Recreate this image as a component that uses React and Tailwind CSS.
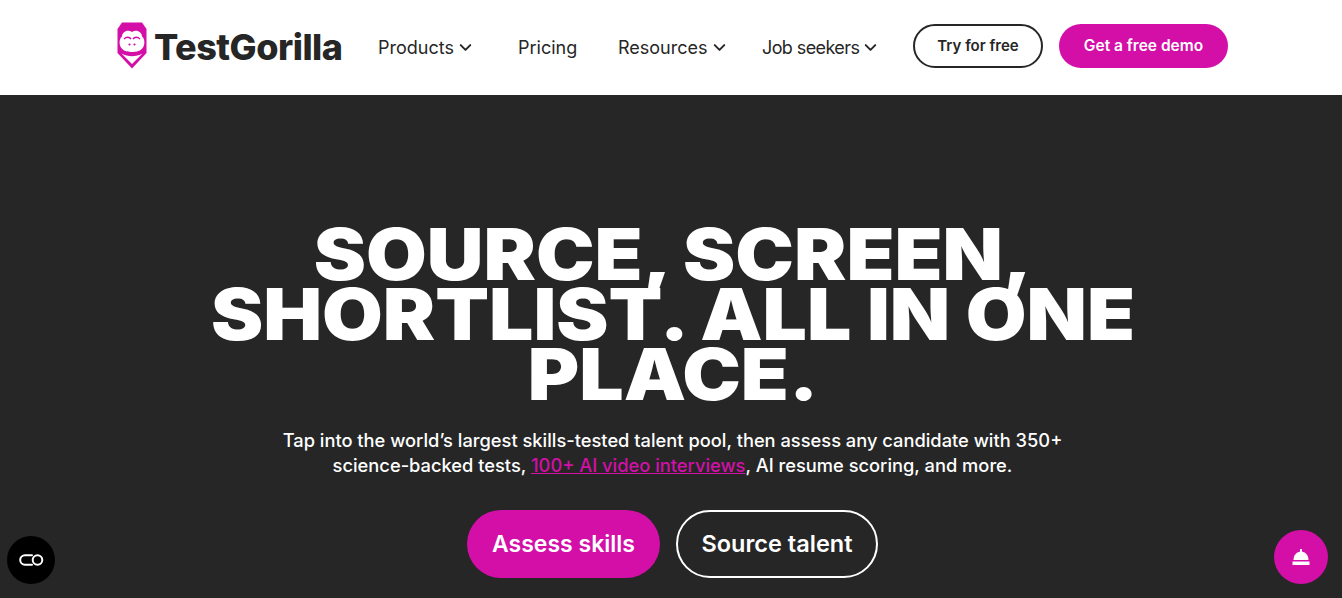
import React from "react";
import { ChevronDown } from "lucide-react";

const LogoMark = () => (
  <svg width="30" height="47" viewBox="0 0 30 47" className="mb-[4px] shrink-0">
    <path d="M5 0.500H25L29.500 7V31L15 46.500L0.500 31V7Z" fill="#d30fa8" />
    <path d="M15 10C19.500 7 25 10 25 14.500C28 17 28 22 26 25.500C23.500 29.500 18 30 15 30C12 30 6.500 29.500 4 25.500C2 22 2 17 5 14.500C5 10 10.500 7 15 10Z" fill="#fff" />
    <path d="M7 17C9.500 14.500 12.500 15 14 17M23 17C20.500 14.500 17.500 15 16 17" fill="none" stroke="#d30fa8" strokeWidth="1.400" />
    <circle cx="12.500" cy="22.500" r="1.100" fill="#d30fa8" />
    <circle cx="17.500" cy="22.500" r="1.100" fill="#d30fa8" />
    <path d="M4.500 31.500C11 35 19 35 25.500 31.500L15 42Z" fill="#fff" />
  </svg>
);

const NavItem = ({ label, hasMenu, className }) => (
  <a href="#" className={`flex items-center gap-[2px] text-[18px] text-[#262626] ${className}`}>
    {label}
    {hasMenu && <ChevronDown size={19} strokeWidth={2.5} />}
  </a>
);

const App = () => {
  return (
    <div className="relative h-[598px] overflow-hidden bg-[#262626] font-['Inter',sans-serif]">
      <header className="flex h-[95px] items-center bg-white pl-[117px]">
        <a href="#" className="flex w-[224px] items-center gap-[7px]">
          <LogoMark />
          <span className="mb-[2px] text-[36px] font-extrabold tracking-[-0.5px] text-[#262626]">TestGorilla</span>
        </a>
        <nav className="ml-[37px] flex items-center">
          <NavItem label="Products" hasMenu className="w-[140px]" />
          <NavItem label="Pricing" className="w-[100px]" />
          <NavItem label="Resources" hasMenu className="w-[144px]" />
          <NavItem label="Job seekers" hasMenu className="w-[151px] tracking-[-0.6px]" />
        </nav>
        <a href="#" className="mb-[3px] flex h-[44px] w-[130px] items-center justify-center rounded-full border-2 border-[#262626] text-[15px] font-semibold text-[#262626]">
          Try for free
        </a>
        <a href="#" className="mb-[3px] ml-[16px] flex h-[44px] w-[169px] items-center justify-center rounded-full bg-[#d30fa8] text-[15.500px] font-semibold text-white">
          Get a free demo
        </a>
      </header>

      <main className="flex flex-col items-center pt-[129px] pl-[3px] text-center">
        <h1 className="w-[860px] scale-x-[1.105] text-[71px] leading-[60px] font-black text-white">
          SOURCE, SCREEN, SHORTLIST. ALL IN ONE PLACE.
        </h1>
        <p className="mt-[24px] w-[810px] text-[18.300px] leading-[25px] font-medium text-white">
          Tap into the world’s largest skills-tested talent pool, then assess any candidate with 350+ science-backed tests,{" "}
          <a href="#" className="text-[#d30fa8] underline">100+ AI video interviews</a>, AI resume scoring, and more.
        </p>
        <div className="mt-[32px] flex gap-[16px]">
          <a href="#" className="flex h-[68px] w-[193px] items-center justify-center rounded-full bg-[#d30fa8] text-[23px] font-semibold text-white">
            Assess skills
          </a>
          <a href="#" className="flex h-[68px] w-[202px] items-center justify-center rounded-full border-2 border-white text-[23.500px] font-semibold text-white">
            Source talent
          </a>
        </div>
      </main>

      <button className="absolute bottom-[14px] left-[7px] flex h-[48px] w-[48px] items-center justify-center rounded-full bg-black">
        <svg width="25" height="12" viewBox="0 0 25 12" fill="none" stroke="#fff" strokeWidth="2">
          <path d="M13 1.200H6a4.800 4.800 0 0 0 0 9.600h7" strokeLinecap="round" />
          <circle cx="18.500" cy="6" r="4.800" />
        </svg>
      </button>

      <button className="absolute right-[14px] bottom-[14px] flex h-[54px] w-[54px] items-center justify-center rounded-full bg-[#d30fa8]">
        <svg width="18" height="17" viewBox="0 0 18 17" fill="#fff">
          <rect x="8" y="0" width="2" height="3" />
          <path d="M1.500 11C1.500 6 5 2.500 9 2.500s7.500 3.500 7.500 8.500Z" />
          <rect x="0.500" y="12.500" width="17" height="3.500" />
        </svg>
      </button>
    </div>
  );
};

export default App;
